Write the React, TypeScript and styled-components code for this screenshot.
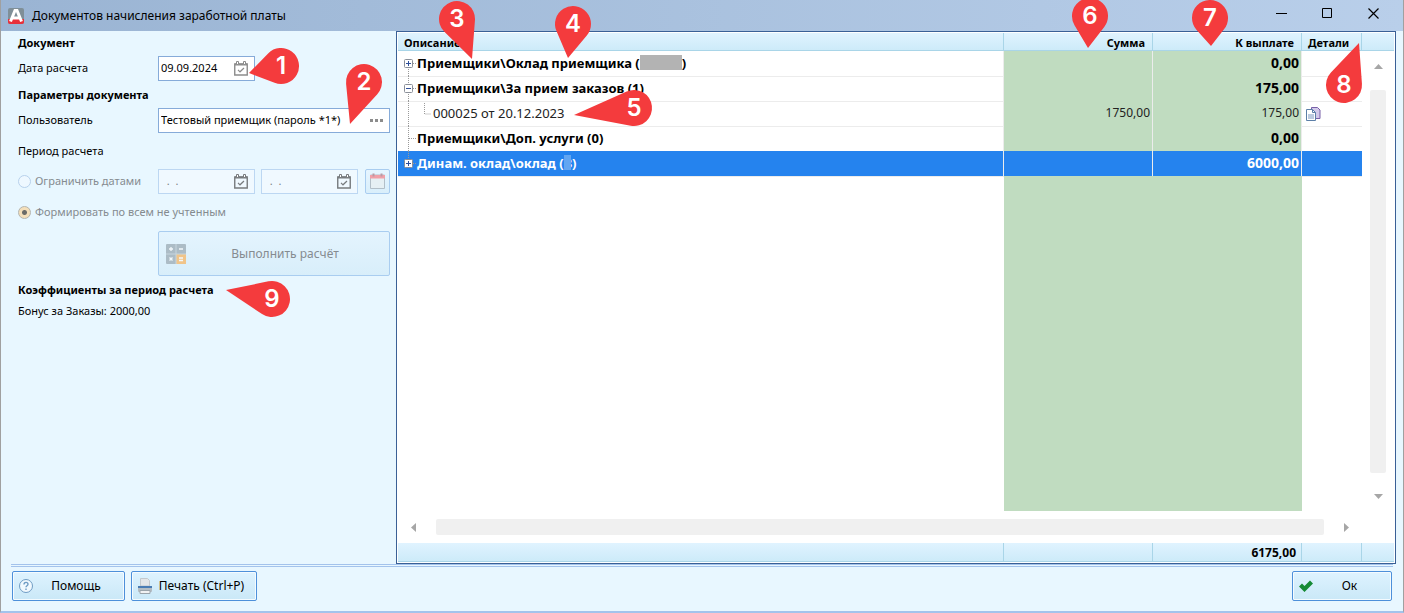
import React from "react";
import styled, { createGlobalStyle, css } from "styled-components";

const GlobalStyle = createGlobalStyle`
  *, *::before, *::after { box-sizing: border-box; }
  body {
    margin: 0;
    background: #e8f7ff;
    color: #000;
    font: 12px/16px "Noto Sans", "Open Sans", sans-serif;
  }
  button, input { font: inherit; color: inherit; margin: 0; }
`;

const Window = styled.div`
  position: relative;
  display: flex;
  flex-direction: column;
  min-height: 100vh;
  border-left: 1px solid #a0a0a0;
  border-right: 1px solid #a0a0a0;
  border-bottom: 2px solid #a3c3ec;
  background: #e8f7ff;
  overflow: hidden;
`;

const TitleBar = styled.header`
  display: flex;
  align-items: center;
  height: 31px;
  margin: 0 -1px;
  padding-left: 8px;
  background: linear-gradient(90deg, #9ab4d3, #b9cfea);
`;

const Title = styled.h1`
  flex: 1;
  margin: 0 0 0 8px;
  font-size: 12px;
  font-weight: 400;
`;

const CaptionButton = styled.button`
  display: flex;
  align-items: center;
  justify-content: center;
  width: 46px;
  height: 31px;
  padding: 0 0 4px;
  border: 0;
  background: none;
`;

const CaptionButtons = styled.div`
  display: flex;
  padding-right: 8px;
`;

const Content = styled.main`
  display: flex;
  flex: 1;
`;

const Form = styled.form`
  width: 395px;
  flex: none;
  padding: 0 6px 0 17px;
  font-size: 11px;
`;

const SectionTitle = styled.h2`
  margin: 0;
  padding: 4px 0 2px;
  font-size: 11px;
  line-height: 16px;
  font-weight: 700;
`;

const FieldRow = styled.div`
  display: flex;
  align-items: center;
  height: 30px;
`;

const FieldLabel = styled.label`
  width: 140px;
  flex: none;
`;

const Note = styled.p<{ $tall?: boolean }>`
  margin: 0;
  padding: ${(p) => (p.$tall ? "8px 0 7px" : "3px 0")};
`;

const InputBox = styled.div<{ $wide?: boolean; $muted?: boolean }>`
  display: flex;
  align-items: center;
  width: ${(p) => (p.$wide ? "232px" : "97px")};
  height: 25px;
  padding: 0 6px 0 2px;
  border: 1px solid ${(p) => (p.$muted ? "#bcd7f2" : "#86abd9")};
  background: ${(p) => (p.$muted ? "#f0f9ff" : "#fff")};
  color: ${(p) => (p.$muted ? "#7d8488" : "#000")};
  & + & { margin-left: 6px; }
`;

const TextInput = styled.input`
  flex: 1;
  min-width: 0;
  padding: 0;
  border: 0;
  outline: 0;
  background: none;
  white-space: pre;
`;

const IconButton = styled.button`
  display: flex;
  align-items: center;
  justify-content: center;
  padding: 0;
  border: 0;
  background: none;
`;

const PeriodButton = styled(IconButton)`
  width: 25px;
  height: 25px;
  margin-left: 7px;
  border: 1px solid #a9cdf0;
  border-radius: 2px;
  background: linear-gradient(#e6f5ff, #d9effb);
`;

const RadioLabel = styled.label<{ $fixed?: boolean }>`
  display: flex;
  align-items: center;
  width: ${(p) => (p.$fixed ? "140px" : "auto")};
  color: #858b90;
  white-space: nowrap;
`;

const Radio = styled.input`
  appearance: none;
  flex: none;
  width: 13px;
  height: 13px;
  margin: 0 4px 0 0;
  border: 1px solid #b7d1ec;
  border-radius: 50%;
  background: #eef8ff;
  &:checked {
    border-color: #b5b5ae;
    background: radial-gradient(circle, #6b6b68 0 2px, #f4dfba 3px 5px);
  }
`;

const Stack = styled.div`
  display: flex;
  flex-direction: column;
  gap: 1px;
`;

const CalcButton = styled.button`
  display: flex;
  align-items: center;
  width: 232px;
  height: 45px;
  margin: 4px 0 2px 140px;
  padding: 0 6px;
  border: 1px solid #a9cdf0;
  border-radius: 2px;
  background: linear-gradient(#e4f4fe, #d8eefa);
  color: #858b90;
  font-size: 12px;
`;

const ButtonText = styled.span`
  flex: 1;
  text-align: center;
  white-space: nowrap;
`;

const GridPanel = styled.section`
  display: flex;
  flex: 1;
  min-width: 0;
  margin-right: 7px;
  border: 1px solid #3a6096;
  padding: 1px;
  background: #fff;
`;

const Table = styled.table`
  display: flex;
  flex-direction: column;
  flex: 1;
  min-width: 0;
  thead, tfoot { display: block; }
  tbody { display: flex; flex-direction: column; flex: 1; }
`;

const rowGrid = css`
  display: grid;
  grid-template-columns: minmax(0, 1fr) 149px 149px 60px;
`;

const bar = css`
  height: 18px;
  border-bottom: 1px solid #a9d5e8;
  background: linear-gradient(#e0f3ff, #cdebf9);
`;

const HeadRow = styled.tr`
  ${rowGrid}
`;

const HeadCell = styled.th<{ $num?: boolean }>`
  ${bar}
  padding: 0 7px 0 6px;
  border-right: 1px solid #a9d5e8;
  font-size: 11px;
  font-weight: 700;
  line-height: 20px;
  text-align: ${(p) => (p.$num ? "right" : "left")};
`;

const FootCell = styled.td`
  ${bar}
  height: 19px;
  padding: 0 5px;
  border-right: 1px solid #a9d5e8;
  font-size: 12px;
  line-height: 20px;
  font-weight: 700;
  text-align: right;
`;

const Row = styled.tr<{ $bold?: boolean; $selected?: boolean; $fill?: boolean }>`
  ${rowGrid}
  height: ${(p) => (p.$fill ? "auto" : "25px")};
  flex: ${(p) => (p.$fill ? "1" : "none")};
  font-size: 13px;
  font-weight: ${(p) => (p.$bold ? 700 : 400)};
  color: ${(p) => (p.$selected ? "#fff" : p.$bold ? "#000" : "#222")};
  td {
    border-bottom: ${(p) => (p.$fill ? "0" : "1px solid #ececec")};
    ${(p) => p.$selected && "background: #2583ee;"}
  }
`;

const Cell = styled.td`
  display: flex;
  align-items: center;
  padding: 0 0 0 4px;
`;

const NameCell = styled(Cell)`
  border-right: 1px solid #ececec;
  padding: 0;
  white-space: pre;
`;

const NameText = styled.span`
  display: flex;
  align-items: center;
  padding-bottom: 2px;
`;

const NumCell = styled(Cell)<{ $fill?: boolean; $strong?: boolean }>`
  justify-content: flex-end;
  padding: 0 2px 2px;
  border-right: ${(p) => (p.$fill ? "0" : "1px solid #ececec")};
  background: #c0dcc0;
  font-size: ${(p) => (p.$strong ? "14px" : "12px")};
`;

const Redacted = styled.span<{ $light?: boolean }>`
  position: relative;
  width: ${(p) => (p.$light ? "7px" : "42px")};
  height: 15px;
  background: ${(p) => (p.$light ? "#62a6f2" : "#b3b3b3")};
`;

const HiddenCount = styled.span`
  margin-left: -6px;
`;

const ScrollCell = styled.td`
  display: block;
  padding: 0;
`;

const ScrollBarRow = styled.tr`
  display: block;
`;

const ScrollRow = styled.div`
  display: flex;
  align-items: center;
  height: 32px;
  padding: 0 13px;
`;

const Thumb = styled.span<{ $vertical?: boolean }>`
  flex: 1;
  width: ${(p) => (p.$vertical ? "16px" : "auto")};
  height: ${(p) => (p.$vertical ? "auto" : "16px")};
  margin: ${(p) => (p.$vertical ? "21px 0" : "0 20px")};
  border-radius: 2px;
  background: #f0f0f0;
`;

const ScrollColumn = styled.div`
  display: flex;
  flex-direction: column;
  width: 32px;
  flex: none;
`;

const VerticalTrack = styled.div`
  display: flex;
  flex: 1;
  flex-direction: column;
  align-items: center;
  padding: 13px 0 12px;
`;

const Cap = styled.div<{ $foot?: boolean }>`
  ${bar}
  height: ${(p) => (p.$foot ? "19px" : "18px")};
  margin-top: ${(p) => (p.$foot ? "32px" : "0")};
`;

const Footer = styled.footer`
  display: flex;
  gap: 6px;
  margin: 0 10px;
  padding: 4px 1px 10px;
  border-top: 3px double #a3c3ec;
`;

const ActionButton = styled.button<{ $width: number }>`
  display: flex;
  align-items: center;
  width: ${(p) => p.$width}px;
  height: 30px;
  padding: 0 6px 0 5px;
  border: 1px solid #4d90da;
  border-radius: 2px;
  background: linear-gradient(#def3ff, #cae8f7);
  box-shadow: inset 0 0 0 1px #f4fbff;
  &:last-child { margin-left: auto; }
`;

const PinSvg = styled.svg<{ $left?: number; $right?: number; $top: number }>`
  position: absolute;
  top: ${(p) => p.$top}px;
  ${(p) => (p.$right !== undefined ? `right: ${p.$right}px;` : `left: ${p.$left}px;`)}
  overflow: visible;
  pointer-events: none;
  font: 600 24px "Inter", "Liberation Sans", sans-serif;
`;

type PinProps = { n: number; left?: number; right?: number; top: number; dx: number; dy: number };

function Pin({ n, left, right, top, dx, dy }: PinProps) {
  const r = 18;
  const d = Math.hypot(dx, dy);
  const a = Math.atan2(dy, dx);
  const b = Math.acos(r / d);
  const point = (t: number) => `${18 + r * Math.cos(t)} ${18 + r * Math.sin(t)}`;
  return (
    <PinSvg $left={left} $right={right} $top={top} width="36" height="36" viewBox="0 0 36 36">
      <path d={`M${18 + dx} ${18 + dy}L${point(a + b)}A18 18 0 1 1 ${point(a - b)}Z`} fill="#f43b3d" />
      <text x="18" y="26" textAnchor="middle" fill="#fff">{n}</text>
    </PinSvg>
  );
}

const Logo = () => (
  <svg width="16" height="16" viewBox="0 0 16 16">
    <rect width="16" height="16" rx="2" fill="#7f8f98" />
    <path d="M0 11h16v3a2 2 0 0 1-2 2H2a2 2 0 0 1-2-2z" fill="#e8303a" />
    <path d="M2.500 13.500L7 2.500h2l4.500 11M5 10h6" fill="none" stroke="#fff" strokeWidth="3" />
  </svg>
);

const CalendarCheck = ({ color }: { color: string }) => (
  <svg width="14" height="15" viewBox="0 0 14 15" fill="none" stroke={color}>
    <path d="M.75 3v11h12.500V3z" strokeWidth="1.400" />
    <path d="M1 3.500h12" strokeWidth="2" />
    <path d="M2.500.5h2v3h-2zM9.500.5h2v3h-2z" fill="#fff" />
    <path d="M4 8.800l2 2L10 7" strokeWidth="1.200" />
  </svg>
);

const CalendarRed = () => (
  <svg width="15" height="16" viewBox="0 0 15 16">
    <path d="M.5 2h14v13.500H.5z" fill="#e6f0f4" stroke="#b2bfc8" />
    <path d="M0 2h15v3.500H0z" fill="#f0a0a8" />
    <path d="M3.500.5v3M11.500.5v3" stroke="#b99aa5" strokeWidth="2" />
  </svg>
);

const Calculator = () => (
  <svg width="22" height="22" viewBox="0 0 22 22">
    <rect x="1" y="1" width="20" height="20" rx="1" fill="#acbcc6" />
    <path d="M11 11h10v10H11z" fill="#f0c489" />
    <path d="M11 1v20M1 11h20" stroke="#c6d5de" />
    <path d="M4 6h4M6 4v4M14 6h4M4.500 14.500l3 3M7.500 14.500l-3 3M14 15h4M14 17.500h4" stroke="#f2f8fb" strokeWidth="1.300" />
  </svg>
);

const HelpIcon = () => (
  <svg width="16" height="16" viewBox="0 0 16 16" fill="none" stroke="#6f9cc4">
    <circle cx="8" cy="8" r="6.500" fill="#f1f9fe" />
    <path d="M6 6.500c0-3 4-2.500 4-.3 0 1.500-2 1.500-2 3M8 10.500v1.500" strokeWidth="1.400" />
  </svg>
);

const PrinterIcon = () => (
  <svg width="16" height="16" viewBox="0 0 16 16">
    <path d="M3.500.5h7l2 2V8h-9z" fill="#e3e6e9" stroke="#c3c9ce" />
    <rect x="1" y="8" width="14" height="6" rx="1" fill="#b4bdc4" />
    <path d="M1 9h14" stroke="#4a7cb4" strokeWidth="2" />
    <path d="M3 12.500h10v3H3z" fill="#f1f2f3" stroke="#9aa4ab" />
  </svg>
);

const CheckIcon = () => (
  <svg width="16" height="16" viewBox="0 0 16 16">
    <path d="M1 8.500l3-3 2.500 2.500L12 2.500l3 3L6.500 14z" fill="#158a35" />
  </svg>
);

const CopyIcon = () => (
  <svg width="15" height="14" viewBox="0 0 15 14">
    <path d="M5.500.5h6l2.500 2.500v8.500H5.500z" fill="#d3c9ea" stroke="#7860a8" />
    <path d="M.5 2.500h6L9.500 5.500v8h-9z" fill="#fff" stroke="#5c7fa8" />
    <path d="M6.500 2.500v3h3" fill="none" stroke="#5c7fa8" />
    <path d="M2 7h6v5H2z" fill="#bccbe0" />
  </svg>
);

const Arrow = ({ d, tall }: { d: string; tall?: boolean }) => (
  <svg width={tall ? 5 : 9} height={tall ? 9 : 5} viewBox={tall ? "0 0 5 9" : "0 0 9 5"}>
    <path d={d} fill="#a6a6a6" />
  </svg>
);

type Node = "plus" | "minus" | "leaf" | "child" | "last";

const trunk: { [K in Node]: string } = {
  plus: "M10.500 12v13",
  minus: "M10.500 0v25",
  leaf: "M10.500 0v25",
  child: "M10.500 0v25M26.500 2v11h7",
  last: "M10.500 0v12",
};

const TreeGlyph = ({ kind }: { kind: Node }) => {
  const box = kind === "plus" || kind === "minus" || kind === "last";
  const width = kind === "child" ? 35 : 19;
  return (
    <svg width={width} height="25" viewBox={`0 0 ${width} 25`} fill="none">
      <path d={trunk[kind]} stroke="#9a9a9a" strokeDasharray="1 1" />
      {kind !== "child" && <path d="M11 12.500h7" stroke="#9a9a9a" strokeDasharray="1 1" />}
      {box && (
        <g stroke="#8a8f98">
          <rect x="6.500" y="8.500" width="8" height="8" rx="1" fill="#fff" />
          <path d={kind === "minus" ? "M8 12.500h5" : "M8 12.500h5M10.500 10v5"} stroke="#2f4f9a" />
        </g>
      )}
    </svg>
  );
};

type Entry = { kind: Node; name: React.ReactNode; sum?: string; pay: string; bold?: boolean; selected?: boolean; copy?: boolean };

const entries: Entry[] = [
  { kind: "plus", name: <>Приемщики\Оклад приемщика (<Redacted />)</>, pay: "0,00", bold: true },
  { kind: "minus", name: "Приемщики\\За прием заказов (1)", pay: "175,00", bold: true },
  { kind: "child", name: "000025 от 20.12.2023", sum: "1750,00", pay: "175,00", copy: true },
  { kind: "leaf", name: "Приемщики\\Доп. услуги (0)", pay: "0,00", bold: true },
  { kind: "last", name: <>Динам. оклад\оклад (<Redacted $light /><HiddenCount>3</HiddenCount>)</>, pay: "6000,00", bold: true, selected: true },
];

const pins: PinProps[] = [
  { n: 1, left: 262, top: 48, dx: -32, dy: 7 },
  { n: 2, left: 345, top: 64, dx: -14, dy: 42 },
  { n: 3, left: 438, top: 1, dx: 15, dy: 40 },
  { n: 4, left: 554, top: 6, dx: -5, dy: 34 },
  { n: 5, left: 615, top: 90, dx: -60, dy: 7 },
  { n: 6, right: 295, top: -2, dx: -2, dy: 32 },
  { n: 7, right: 175, top: 0, dx: 1, dy: 28 },
  { n: 8, right: 41, top: 67, dx: 15, dy: -42 },
  { n: 9, left: 253, top: 281, dx: -46, dy: -9 },
];

export default function App() {
  return (
    <Window>
      <GlobalStyle />
      <TitleBar>
        <Logo />
        <Title>Документов начисления заработной платы</Title>
        <CaptionButtons>
          <CaptionButton aria-label="Свернуть">
            <svg width="11" height="11" viewBox="0 0 11 11"><path d="M0 5.500h11" stroke="#000" /></svg>
          </CaptionButton>
          <CaptionButton aria-label="Развернуть">
            <svg width="11" height="11" viewBox="0 0 11 11"><path d="M.5.5h9v9h-9z" fill="none" stroke="#000" /></svg>
          </CaptionButton>
          <CaptionButton aria-label="Закрыть">
            <svg width="11" height="11" viewBox="0 0 11 11"><path d="M.5.5l10 10M10.500.5l-10 10" stroke="#000" strokeWidth="1.200" /></svg>
          </CaptionButton>
        </CaptionButtons>
      </TitleBar>

      <Content>
        <Form onSubmit={(e) => e.preventDefault()}>
          <SectionTitle>Документ</SectionTitle>
          <FieldRow>
            <FieldLabel htmlFor="date">Дата расчета</FieldLabel>
            <InputBox>
              <TextInput id="date" defaultValue="09.09.2024" />
              <IconButton type="button" aria-label="Календарь"><CalendarCheck color="#8c8c8c" /></IconButton>
            </InputBox>
          </FieldRow>
          <SectionTitle>Параметры документа</SectionTitle>
          <FieldRow>
            <FieldLabel htmlFor="user">Пользователь</FieldLabel>
            <InputBox $wide>
              <TextInput id="user" defaultValue="Тестовый приемщик (пароль *1*)" />
              <IconButton type="button" aria-label="Выбрать">
                <svg width="13" height="3" viewBox="0 0 13 3"><path d="M0 0h3v3H0zM5 0h3v3H5zM10 0h3v3h-3z" fill="#8c8c8c" /></svg>
              </IconButton>
            </InputBox>
          </FieldRow>
          <Note $tall>Период расчета</Note>
          <Stack>
            <FieldRow>
              <RadioLabel $fixed><Radio type="radio" name="period" disabled />Ограничить датами</RadioLabel>
              <InputBox $muted>
                <TextInput aria-label="Дата начала" defaultValue="  .  ." disabled />
                <IconButton type="button" aria-label="Календарь" disabled><CalendarCheck color="#777b7e" /></IconButton>
              </InputBox>
              <InputBox $muted>
                <TextInput aria-label="Дата окончания" defaultValue="  .  ." disabled />
                <IconButton type="button" aria-label="Календарь" disabled><CalendarCheck color="#777b7e" /></IconButton>
              </InputBox>
              <PeriodButton type="button" aria-label="Период" disabled><CalendarRed /></PeriodButton>
            </FieldRow>
            <FieldRow>
              <RadioLabel><Radio type="radio" name="period" defaultChecked disabled />Формировать по всем не учтенным</RadioLabel>
            </FieldRow>
          </Stack>
          <CalcButton type="button" disabled>
            <Calculator />
            <ButtonText>Выполнить расчёт</ButtonText>
          </CalcButton>
          <SectionTitle>Коэффициенты за период расчета</SectionTitle>
          <Note>Бонус за Заказы: 2000,00</Note>
        </Form>

        <GridPanel>
          <Table>
            <thead>
              <HeadRow>
                <HeadCell>Описание</HeadCell>
                <HeadCell $num>Сумма</HeadCell>
                <HeadCell $num>К выплате</HeadCell>
                <HeadCell>Детали</HeadCell>
              </HeadRow>
            </thead>
            <tbody>
              {entries.map((r, i) => (
                <Row key={i} $bold={r.bold} $selected={r.selected}>
                  <NameCell><TreeGlyph kind={r.kind} /><NameText>{r.name}</NameText></NameCell>
                  <NumCell>{r.sum}</NumCell>
                  <NumCell $strong={r.bold}>{r.pay}</NumCell>
                  <Cell>{r.copy && <CopyIcon />}</Cell>
                </Row>
              ))}
              <Row $fill>
                <Cell />
                <NumCell $fill />
                <NumCell $fill />
                <Cell />
              </Row>
            </tbody>
            <tfoot>
              <ScrollBarRow>
                <ScrollCell colSpan={4}>
                  <ScrollRow>
                    <Arrow tall d="M5 0v9L0 4.500z" />
                    <Thumb />
                    <Arrow tall d="M0 0v9l5-4.500z" />
                  </ScrollRow>
                </ScrollCell>
              </ScrollBarRow>
              <HeadRow>
                <FootCell />
                <FootCell />
                <FootCell>6175,00</FootCell>
                <FootCell />
              </HeadRow>
            </tfoot>
          </Table>
          <ScrollColumn>
            <Cap />
            <VerticalTrack>
              <Arrow d="M0 5h9L4.500 0z" />
              <Thumb $vertical />
              <Arrow d="M0 0h9L4.500 5z" />
            </VerticalTrack>
            <Cap $foot />
          </ScrollColumn>
        </GridPanel>
      </Content>

      <Footer>
        <ActionButton $width={113}><HelpIcon /><ButtonText>Помощь</ButtonText></ActionButton>
        <ActionButton $width={126}><PrinterIcon /><ButtonText>Печать (Ctrl+P)</ButtonText></ActionButton>
        <ActionButton $width={100}><CheckIcon /><ButtonText>Ок</ButtonText></ActionButton>
      </Footer>

      {pins.map((p) => <Pin key={p.n} {...p} />)}
    </Window>
  );
}
